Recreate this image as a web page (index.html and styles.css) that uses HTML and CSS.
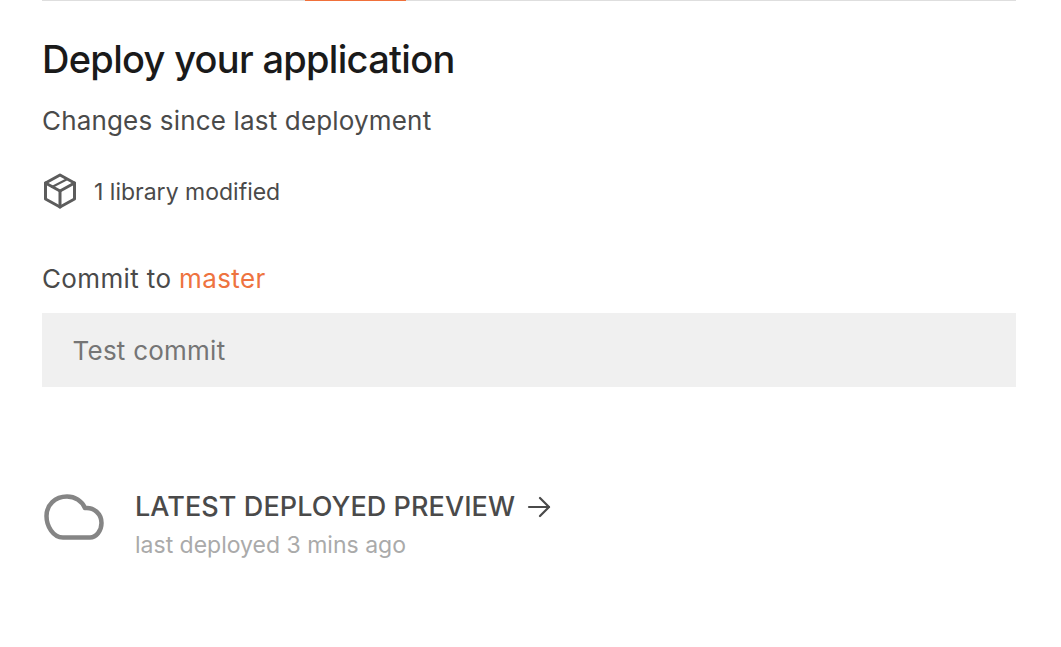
FILE: index.html
```html
<!DOCTYPE html>
<html lang="en">
<head>
    <meta charset="UTF-8">
    <meta name="viewport" content="width=device-width, initial-scale=1.0">
    <title>Deploy</title>
    <link rel="stylesheet" href="styles.css">
</head>
<body>

<div class="container">
    <div class="tabs">
        <div class="tab-active"></div>
    </div>

    <h1>Deploy your application</h1>
    <p class="changes-title">Changes since last deployment</p>

    <div class="change-row">
        <svg class="box-icon" width="36" height="36" viewBox="0 0 36 36" fill="none" stroke="#5c5c5c" stroke-width="3" stroke-linejoin="round" stroke-linecap="round">
            <path d="M18 2 L32.5 10 V26 L18 34 L3.5 26 V10 Z"/>
            <path d="M3.5 10 L18 18 L32.5 10"/>
            <path d="M18 18 V34"/>
            <path d="M10 14 L24.5 6.5" stroke-width="2"/>
        </svg>
        <span>1 library modified</span>
    </div>

    <label class="commit-label" for="commitInput">Commit to <span class="branch">master</span></label>
    <input class="commit-input" id="commitInput" type="text" placeholder="Test commit">

    <div class="preview">
        <svg class="cloud-icon" width="60" height="46" viewBox="0 0 60 46" fill="none" stroke="#858585" stroke-width="4.5" stroke-linejoin="round">
            <path d="M19 43.5 C9 43.5 2.5 32 2.5 22 C2.5 11 11 2.5 23 2.5 C31 2.5 38 7 41 14 C50 13 57.5 20 57.5 29 C57.5 37 52 43.5 46 43.5 Z"/>
        </svg>
        <div class="preview-text">
            <div class="preview-title">
                LATEST DEPLOYED PREVIEW
                <svg width="24" height="24" viewBox="0 0 24 24" fill="none" stroke="#4a4a4a" stroke-width="2.2" stroke-linecap="round" stroke-linejoin="round">
                    <path d="M2 12 H22"/>
                    <path d="M13 3 L22 12 L13 21"/>
                </svg>
            </div>
            <div class="preview-time">last deployed 3 mins ago</div>
        </div>
    </div>
</div>

</body>
</html>
```

FILE: styles.css
```css
body {
    font-family: Inter, "Liberation Sans", sans-serif;
    background-color: white;
    margin: 0;
    color: #4a4a4a;
}
.container {
    margin: 0 45px 0 42px;
}
.tabs {
    height: 1px;
    background-color: #dedede;
    padding-left: 263px;
}
.tab-active {
    width: 101px;
    height: 1px;
    background-color: #f0703a;
}
h1 {
    margin: 36px 0 0;
    font-size: 38px;
    line-height: 44px;
    font-weight: 500;
    letter-spacing: -0.7px;
    color: #1a1a1a;
}
.changes-title {
    margin: 22px 0 0;
    font-size: 26px;
    line-height: 36px;
    letter-spacing: 0.17px;
}
.change-row {
    display: flex;
    align-items: center;
    gap: 16px;
    margin-top: 35px;
    font-size: 23px;
    line-height: 36px;
}
.box-icon {
    margin-top: -2px;
}
.commit-label {
    display: block;
    margin-top: 51px;
    font-size: 26px;
    line-height: 36px;
    letter-spacing: 0.37px;
}
.branch {
    color: #ee7340;
}
.commit-input {
    display: block;
    box-sizing: border-box;
    width: 100%;
    height: 74px;
    margin-top: 16px;
    padding: 0 30.5px;
    border: none;
    background-color: #f0f0f0;
    font-family: inherit;
    font-size: 26px;
    letter-spacing: 0.24px;
}
.commit-input::placeholder {
    color: #757575;
}
.preview {
    display: flex;
    align-items: flex-start;
    gap: 31px;
    margin-top: 102px;
    margin-left: 2px;
}
.cloud-icon {
    margin-top: 5px;
}
.preview-title {
    display: flex;
    align-items: center;
    gap: 12px;
    font-size: 27px;
    line-height: 36px;
    font-weight: 500;
    letter-spacing: 0.08px;
}
.preview-time {
    margin-top: 2px;
    font-size: 23px;
    line-height: 36px;
    color: #aaaaaa;
}
```
